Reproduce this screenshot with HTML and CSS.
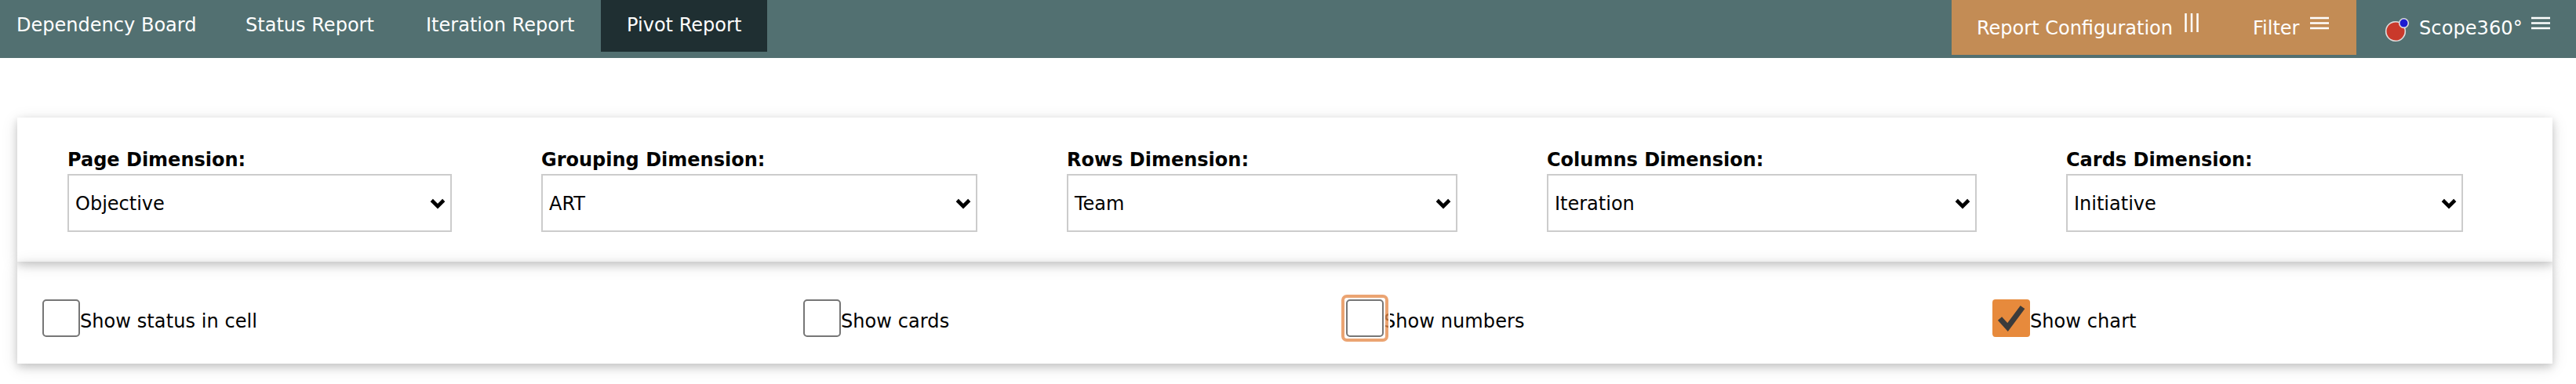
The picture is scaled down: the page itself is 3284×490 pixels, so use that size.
FILE: index.html
```
<!DOCTYPE html>
<html lang="en">
<head>
<meta charset="utf-8">
<title>Pivot Report</title>
<link rel="stylesheet" href="styles.css">
</head>
<body>
<header class="topbar">
  <nav class="tabs">
    <a class="tab tab-board">Dependency Board</a>
    <a class="tab tab-status">Status Report</a>
    <a class="tab tab-iteration">Iteration Report</a>
    <a class="tab tab-pivot active">Pivot Report</a>
  </nav>
  <div class="tools">
    <div class="config">
      <span class="config-label">Report Configuration</span>
      <svg class="icon-columns" width="18" height="24" viewBox="0 0 18 24"><path d="M1.5 0v24M9 0v24M16.5 0v24"/></svg>
      <span class="filter-label">Filter</span>
      <svg class="icon-menu" width="24" height="18" viewBox="0 0 24 18"><path d="M0 2h24M0 8.5h24M0 15h24"/></svg>
    </div>
    <div class="brand">
      <svg class="logo" width="32" height="32" viewBox="0 0 32 32"><circle class="logo-main" cx="14" cy="18" r="12.3"/><circle class="logo-dot" cx="24.5" cy="7.6" r="5.8"/></svg>
      <span class="brand-label">Scope360°</span>
      <svg class="icon-menu" width="24" height="18" viewBox="0 0 24 18"><path d="M0 2h24M0 8.5h24M0 15h24"/></svg>
    </div>
  </div>
</header>
<main class="content">
  <section class="panel dimensions">
    <div class="field"><span class="label">Page Dimension:</span><div class="select"><span>Objective</span><svg class="chevron" width="20" height="14" viewBox="0 0 20 14"><path d="M2.3 2.5L10 10.2L17.7 2.5"/></svg></div></div>
    <div class="field"><span class="label">Grouping Dimension:</span><div class="select"><span>ART</span><svg class="chevron" width="20" height="14" viewBox="0 0 20 14"><path d="M2.3 2.5L10 10.2L17.7 2.5"/></svg></div></div>
    <div class="field"><span class="label">Rows Dimension:</span><div class="select"><span>Team</span><svg class="chevron" width="20" height="14" viewBox="0 0 20 14"><path d="M2.3 2.5L10 10.2L17.7 2.5"/></svg></div></div>
    <div class="field"><span class="label">Columns Dimension:</span><div class="select"><span>Iteration</span><svg class="chevron" width="20" height="14" viewBox="0 0 20 14"><path d="M2.3 2.5L10 10.2L17.7 2.5"/></svg></div></div>
    <div class="field"><span class="label">Cards Dimension:</span><div class="select"><span>Initiative</span><svg class="chevron" width="20" height="14" viewBox="0 0 20 14"><path d="M2.3 2.5L10 10.2L17.7 2.5"/></svg></div></div>
  </section>
  <section class="panel options">
    <div class="option"><span class="checkbox"></span><span class="option-label">Show status in cell</span></div>
    <div class="option"><span class="checkbox"></span><span class="option-label">Show cards</span></div>
    <div class="option"><span class="checkbox focused"></span><span class="option-label">Show numbers</span></div>
    <div class="option"><span class="checkbox checked"><svg width="48" height="48" viewBox="0 0 48 48"><path d="M9.5 24.5L19.5 35.5L38.5 10"/></svg></span><span class="option-label">Show chart</span></div>
  </section>
</main>
</body>
</html>
```
FILE: styles.css
```
* { box-sizing: border-box; }
body {
  margin: 0;
  background: #fff;
  color: #000;
  font-family: Verdana, "DejaVu Sans", sans-serif;
  font-size: 24px;
  line-height: 30px;
  white-space: nowrap;
}
svg { display: block; fill: none; flex: none; }
.topbar {
  height: 74px;
  display: flex;
  justify-content: space-between;
  background: #527071;
  color: #fff;
}
.tabs { display: flex; height: 66px; }
.tab { padding-top: 17px; letter-spacing: .02px; }
.tab-board { width: 292px; margin-left: 21px; }
.tab-status { width: 230px; }
.tab-iteration { width: 223px; }
.tab-pivot { width: 212px; padding-left: 33px; }
.active { background: #1f2f32; }
.tools { display: flex; width: 796px; }
.config {
  display: flex;
  width: 516px;
  height: 70px;
  padding: 18px 0 0 32px;
  background: #c38c55;
}
.config-label { width: 265px; padding-top: 3px; }
.filter-label { width: 73px; margin-left: 69px; padding-top: 3px; }
.icon-columns { stroke: #fff; stroke-width: 2.5; margin-top: -1px; }
.icon-menu { stroke: #fff; stroke-width: 2.6; margin-top: 3px; }
.brand { display: flex; padding: 18px 0 0 36px; }
.brand-label { width: 143px; margin-left: 12px; padding-top: 3px; letter-spacing: .1px; }
.logo { margin-top: 4px; stroke: #ddd; stroke-width: 1.6; }
.logo-main { fill: #c9392b; }
.logo-dot { fill: #1b1bd0; }
.content { padding: 76px 30px 26px 22px; }
.panel { box-shadow: 0 4px 10px rgba(0, 0, 0, .16), 0 4px 20px rgba(0, 0, 0, .12); }
.dimensions {
  height: 184px;
  padding: 38px 114px 38px 64px;
  display: grid;
  grid-template-columns: 490fr 556fr 498fr 548fr 506fr;
  column-gap: 114px;
}
.label { display: block; height: 34px; padding-top: 1px; font-weight: bold; }
.select {
  height: 74px;
  padding: 1px 6px 0 8px;
  border: 2px solid #ccc;
  display: flex;
  align-items: center;
  justify-content: space-between;
}
.chevron { stroke: #000; stroke-width: 4.6; }
.options {
  height: 130px;
  padding: 48px 0 0 32px;
  display: grid;
  grid-template-columns: 970px 692px 824px 1fr;
}
.option { display: flex; }
.checkbox {
  position: relative;
  width: 48px;
  height: 48px;
  border: 2px solid #767676;
  border-radius: 5px;
}
.option-label { padding-top: 13px; letter-spacing: .08px; }
.focused { z-index: 1; }
.focused::before {
  content: "";
  position: absolute;
  inset: -8px;
  border: 4px solid rgba(229, 139, 74, .78);
  border-radius: 7px;
  box-shadow: 0 0 0 2px #fff, inset 0 0 0 2px #fff;
}
.checked { border: 0; border-radius: 4px; background: #e78a3c; }
.checked svg { stroke: #3b3b3b; stroke-width: 7; }
```
